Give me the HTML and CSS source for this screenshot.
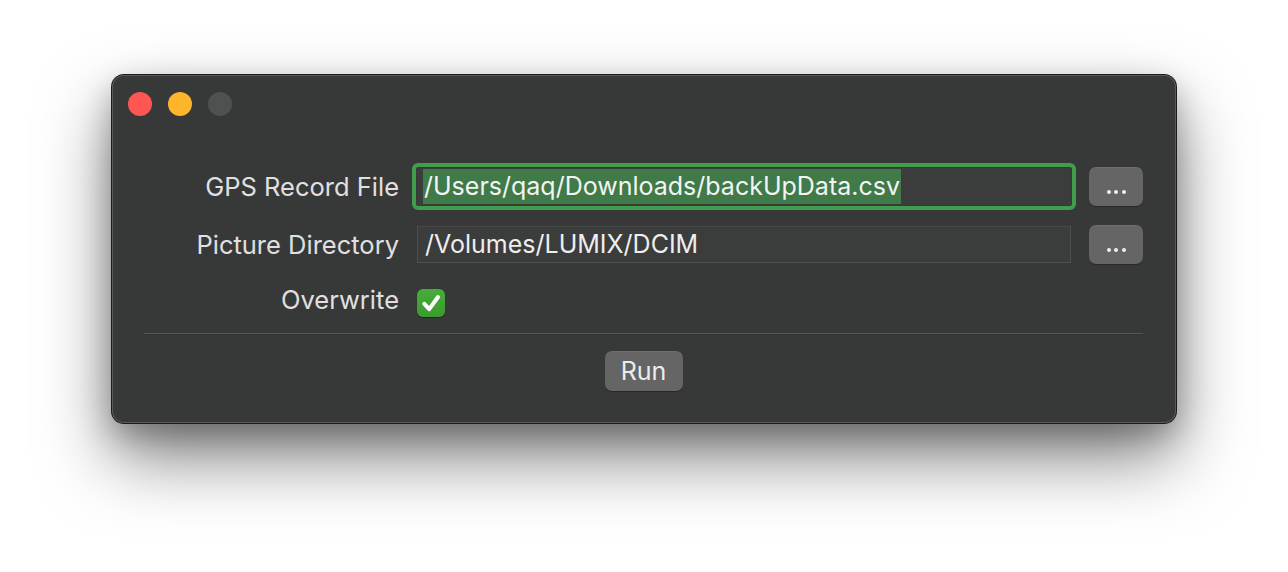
FILE: index.html
```html
<!DOCTYPE html>
<html>
<head>
<meta charset="utf-8">
<link rel="stylesheet" href="styles.css">
</head>
<body>
<div class="window">
  <div class="titlebar">
    <span class="light red"></span>
    <span class="light yellow"></span>
    <span class="light grey"></span>
  </div>
  <div class="form">
    <div class="row row-field">
      <label class="label">GPS Record File</label>
      <div class="field focused"><span class="sel">/Users/qaq/Downloads/backUpData.csv</span></div>
      <button class="btn dots"><span></span><span></span><span></span></button>
    </div>
    <div class="row row-field row-second">
      <label class="label">Picture Directory</label>
      <div class="field"><span class="txt">/Volumes/LUMIX/DCIM</span></div>
      <button class="btn dots"><span></span><span></span><span></span></button>
    </div>
    <div class="row row-check">
      <label class="label">Overwrite</label>
      <div class="checkbox">
        <svg width="28" height="28" viewBox="0 0 28 28">
          <path d="M7.3 14.8 L12.2 20.2 L21 8" fill="none" stroke="#ffffff" stroke-width="4" stroke-linecap="round" stroke-linejoin="round"/>
        </svg>
      </div>
    </div>
  </div>
  <div class="separator"></div>
  <div class="actions">
    <button class="btn run">Run</button>
  </div>
</div>
</body>
</html>
```

FILE: styles.css
```css
html, body {
  margin: 0;
  padding: 0;
  background: #ffffff;
  width: 1288px;
  height: 572px;
  overflow: hidden;
}

body {
  font-family: Inter, "Liberation Sans", sans-serif;
}

.window {
  margin: 75px 0 0 112px;
  width: 1064px;
  height: 348px;
  box-sizing: border-box;
  background: #373838;
  border-radius: 12px;
  padding: 0 33px 32px 32px;
  box-shadow:
    inset 0 0 0 1px #595a5a,
    0 0 0 1px #1b1b1b,
    0 34px 70px rgba(0, 0, 0, 0.5),
    0 12px 30px rgba(0, 0, 0, 0.25);
}

.titlebar {
  height: 91px;
  box-sizing: border-box;
  padding-top: 17px;
  margin-left: -16px;
  display: flex;
  gap: 16px;
}

.light {
  width: 24px;
  height: 24px;
  border-radius: 50%;
  display: block;
}
.red { background: #fe5753; }
.yellow { background: #fdb52c; }
.grey { background: #4f5150; }

.form {
  display: flex;
  flex-direction: column;
}

.row {
  display: grid;
  grid-template-columns: 255px 1fr 54px;
  column-gap: 18px;
  align-items: center;
}

.row-field { height: 40px; }
.row-second { margin-top: 18px; }
.row-check {
  height: 28px;
  margin-top: 25px;
  align-items: start;
}

.label {
  justify-self: end;
  color: #e0e0e0;
  font-size: 25.5px;
  letter-spacing: 0;
}

.row-check .label {
  line-height: 22px;
}

.field {
  height: 37px;
  box-sizing: border-box;
  background: #3b3c3c;
  border: 1px solid #4e4f4f;
  border-top-color: #454646;
  display: flex;
  align-items: center;
  padding-left: 6px;
  font-size: 25px;
  color: #eeeeee;
  white-space: nowrap;
  overflow: hidden;
}

.field.focused {
  border-color: #3b3c3c;
  outline: 4px solid #3f9d4c;
  outline-offset: 1px;
  border-radius: 1px;
  padding-left: 5px;
}

.sel {
  background: #3f7a48;
  height: 35px;
  display: flex;
  align-items: center;
  padding: 0 1px;
  color: #f4f4f4;
}

.txt {
  padding-left: 1px;
}

.btn {
  border: none;
  background: #656565;
  border-radius: 7px;
  box-shadow: 0 1px 1px rgba(0, 0, 0, 0.3), inset 0 1px 0 rgba(255, 255, 255, 0.06);
  font-family: inherit;
  color: #ececec;
  padding: 0;
}

.dots {
  height: 39px;
  width: 54px;
  display: flex;
  justify-content: center;
  align-items: center;
  gap: 3.5px;
  padding-top: 12px;
  box-sizing: border-box;
}
.dots span {
  width: 4px;
  height: 4px;
  border-radius: 50%;
  background: #eeeeee;
  display: block;
}

.checkbox {
  width: 28px;
  height: 28px;
  border-radius: 6px;
  background: linear-gradient(#47ad3a, #3a9b2e);
  box-shadow: 0 1px 1px rgba(0, 0, 0, 0.35);
}
.checkbox svg { display: block; }

.separator {
  margin-top: 16px;
  height: 1px;
  background: #565757;
  border-bottom: 1px solid #2f3030;
}

.actions {
  margin-top: 16px;
  display: flex;
  justify-content: center;
}

.run {
  width: 78px;
  height: 40px;
  font-size: 25px;
}
```
